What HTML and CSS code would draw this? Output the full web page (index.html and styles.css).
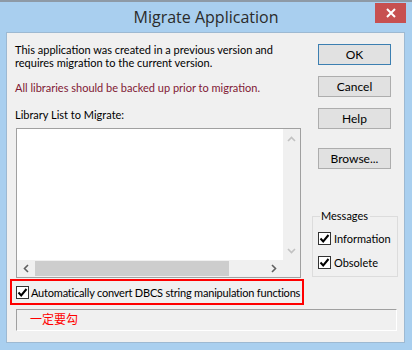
FILE: index.html
```html
<!DOCTYPE html>
<html lang="en">
<head>
    <meta charset="UTF-8">
    <title>Migrate Application</title>
    <link rel="stylesheet" href="styles.css">
</head>
<body>
    <div class="window">
        <div class="titlebar">
            <span></span>
            <div class="title">Migrate Application</div>
            <div class="close">
                <svg width="10" height="10" viewBox="0 0 10 10"><path d="M1 1L9 9M9 1L1 9" stroke="#fff" stroke-width="2"/></svg>
            </div>
        </div>

        <div class="client">
            <div class="main">
                <div class="left">
                    <p class="intro">This application was created in a previous version and<br>requires migration to the current version.</p>
                    <p class="warn">All libraries should be backed up prior to migration.</p>
                    <p class="list-label">Library List to Migrate:</p>
                    <div class="listbox">
                        <div class="list-body">
                            <div class="list-items"></div>
                            <div class="vscroll">
                                <svg width="9" height="6" viewBox="0 0 9 6"><path d="M1 5L4.5 1.5L8 5" fill="none" stroke="#c2c2c2" stroke-width="1.6"/></svg>
                                <svg width="9" height="6" viewBox="0 0 9 6"><path d="M1 1L4.5 4.5L8 1" fill="none" stroke="#c2c2c2" stroke-width="1.6"/></svg>
                            </div>
                        </div>
                        <div class="hscroll">
                            <svg class="arrow" width="6" height="9" viewBox="0 0 6 9"><path d="M5 1L1.5 4.5L5 8" fill="none" stroke="#606060" stroke-width="1.6"/></svg>
                            <div class="track"><div class="thumb"></div></div>
                            <svg class="arrow" width="6" height="9" viewBox="0 0 6 9"><path d="M1 1L4.5 4.5L1 8" fill="none" stroke="#606060" stroke-width="1.6"/></svg>
                            <div class="corner"></div>
                        </div>
                    </div>
                </div>

                <div class="right">
                    <button class="btn default">OK</button>
                    <button class="btn">Cancel</button>
                    <button class="btn">Help</button>
                    <button class="btn browse">Browse...</button>

                    <div class="group">
                        <span class="legend">Messages</span>
                        <label class="check">
                            <span class="box"><svg width="11" height="11" viewBox="0 0 11 11"><path d="M1.5 5.5L4.2 8.4L9.5 2" fill="none" stroke="#000" stroke-width="2"/></svg></span>
                            Information
                        </label>
                        <label class="check">
                            <span class="box"><svg width="11" height="11" viewBox="0 0 11 11"><path d="M1.5 5.5L4.2 8.4L9.5 2" fill="none" stroke="#000" stroke-width="2"/></svg></span>
                            Obsolete
                        </label>
                    </div>
                </div>
            </div>

            <div class="highlight">
                <label class="check">
                    <span class="box"><svg width="11" height="11" viewBox="0 0 11 11"><path d="M1.5 5.5L4.2 8.4L9.5 2" fill="none" stroke="#000" stroke-width="2"/></svg></span>
                    Automatically convert DBCS string manipulation functions
                </label>
            </div>

            <div class="status">一定要勾</div>
        </div>
    </div>
</body>
</html>
```

FILE: styles.css
```css
body {
    margin: 0;
    background-color: #a9cfef;
    font-family: Lato, 'Noto Sans', 'Noto Sans CJK SC', sans-serif;
    font-size: 11px;
    color: #000;
}
.window {
    width: 412px;
    height: 350px;
    border-top: 2px solid #8e9aa6;
    box-sizing: border-box;
}
.titlebar {
    height: 30px;
    display: grid;
    grid-template-columns: 1fr auto 1fr;
}
.title {
    font-family: 'Open Sans', sans-serif;
    font-size: 16px;
    color: #2b2b2b;
    line-height: 30px;
}
.close {
    justify-self: end;
    margin: 1px 6px 0 0;
    width: 31px;
    height: 20px;
    background-color: #c75050;
    display: flex;
    align-items: center;
    justify-content: center;
}
.client {
    margin: 0 7px 0 6px;
    height: 311px;
    box-sizing: border-box;
    background-color: #f0f0f0;
    border: 1px solid #9db9d2;
    padding: 10px 0 0 0;
}
.main {
    display: flex;
    height: 234px;
}
.left {
    width: 286px;
    padding-left: 8px;
}
.left p {
    margin: 0;
    line-height: 13px;
    white-space: nowrap;
}
.warn {
    color: #801834;
    margin-top: 12px !important;
}
.list-label {
    margin-top: 14px !important;
}
.listbox {
    margin-top: 7px;
    margin-left: 1px;
    width: 285px;
    height: 150px;
    box-sizing: border-box;
    border: 1px solid #a0a0a0;
    background-color: #fff;
    display: flex;
    flex-direction: column;
}
.list-body {
    flex: 1;
    display: flex;
}
.list-items {
    flex: 1;
}
.vscroll {
    width: 17px;
    background-color: #f0f0f0;
    display: flex;
    flex-direction: column;
    justify-content: space-between;
    align-items: center;
    padding: 7px 0 6px;
}
.hscroll {
    height: 17px;
    background-color: #f0f0f0;
    display: flex;
    align-items: center;
}
.hscroll .arrow {
    margin: 0 6px;
}
.track {
    flex: 1;
    height: 15px;
}
.thumb {
    width: 194px;
    height: 15px;
    background-color: #cdcdcd;
}
.corner {
    width: 17px;
    height: 17px;
}
.right {
    width: 86px;
    margin-left: 11px;
    display: flex;
    flex-direction: column;
    align-items: flex-start;
}
.btn {
    width: 73px;
    height: 21px;
    margin: 0 0 11px 6px;
    padding: 0;
    border: 1px solid #adadad;
    background-color: #e1e1e1;
    font-family: inherit;
    font-size: 12px;
    color: #000;
}
.btn.default {
    margin-top: 1px;
    border-color: #3c7fb1;
}
.btn.browse {
    margin-top: 8px;
}
.group {
    margin-top: auto;
    width: 86px;
    height: 61px;
    box-sizing: border-box;
    border: 1px solid #dcdcdc;
    padding: 0 0 0 5px;
}
.legend {
    display: block;
    width: max-content;
    margin: -8px 0 0 2px;
    padding: 0 2px 0 1px;
    line-height: 14px;
    background-color: #f0f0f0;
}
.check {
    display: flex;
    align-items: center;
    gap: 3px;
    height: 13px;
    margin-top: 11px;
    white-space: nowrap;
}
.group .check:first-of-type {
    margin-top: 9px;
}
.box {
    flex: none;
    width: 13px;
    height: 13px;
    box-sizing: border-box;
    border: 1px solid #333;
    background-color: #fff;
    display: flex;
    align-items: center;
    justify-content: center;
}
.highlight {
    margin: 2px 0 0 3px;
    width: 294px;
    height: 26px;
    box-sizing: border-box;
    border: 2px solid #ff0000;
    padding-left: 4px;
    display: flex;
    align-items: center;
    overflow: hidden;
}
.highlight .check {
    margin-top: 0;
    gap: 2px;
    letter-spacing: -0.2px;
}
.status {
    margin: 4px 0 0 9px;
    width: 381px;
    height: 22px;
    box-sizing: border-box;
    border: 1px solid #fff;
    border-top-color: #a0a0a0;
    border-left-color: #a0a0a0;
    padding-left: 13px;
    line-height: 20px;
    font-size: 12px;
    color: #ff0000;
}
```
